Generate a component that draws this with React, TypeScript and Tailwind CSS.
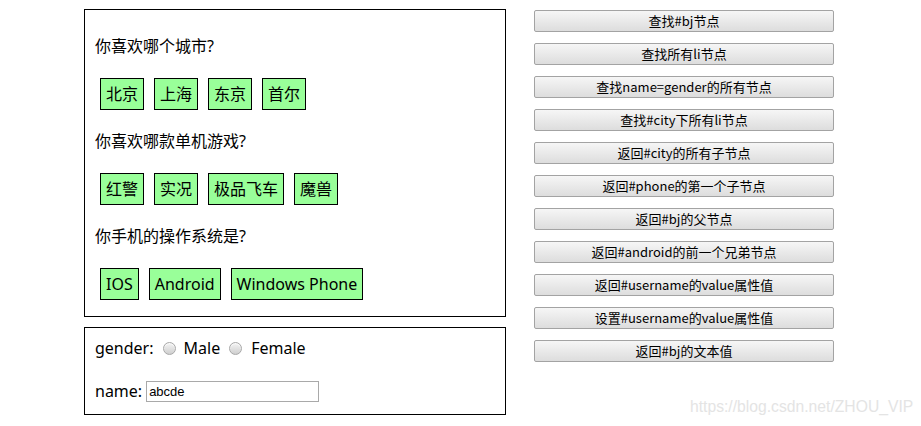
import React from "react";

const groups = [
  { q: "你喜欢哪个城市?", items: ["北京", "上海", "东京", "首尔"] },
  { q: "你喜欢哪款单机游戏?", items: ["红警", "实况", "极品飞车", "魔兽"] },
  { q: "你手机的操作系统是?", items: ["IOS", "Android", "Windows Phone"] },
];

const buttons = [
  "查找#bj节点",
  "查找所有li节点",
  "查找name=gender的所有节点",
  "查找#city下所有li节点",
  "返回#city的所有子节点",
  "返回#phone的第一个子节点",
  "返回#bj的父节点",
  "返回#android的前一个兄弟节点",
  "返回#username的value属性值",
  "设置#username的value属性值",
  "返回#bj的文本值",
];

function Radio() {
  return (
    <span className="inline-block h-[13px] w-[13px] rounded-full border border-[#a8a8a8] bg-gradient-to-b from-[#f4f4f4] to-[#cfcfcf] shadow-[inset_0_1px_1px_rgba(255,255,255,0.8)]" />
  );
}

export default function App() {
  return (
    <div
      className="relative h-[426px] w-[921px] overflow-hidden bg-white text-black"
      style={{ fontFamily: '"Microsoft YaHei", "Noto Sans CJK SC", sans-serif' }}
    >
      <div className="flex items-start gap-[28px] pl-[84px] pt-[9px]">
        {/* left column */}
        <div
          className="flex w-[422px] flex-col gap-[10px]"
          style={{ fontFamily: '"Noto Sans", "Noto Sans CJK SC", sans-serif' }}
        >
          <div className="border border-black px-[10px] pb-[11px] pt-[10px]">
            {groups.map((g) => (
              <div key={g.q} className="pt-[16px]">
                <p className="text-[16px] leading-[21px]">{g.q}</p>
                <ul className="mt-[16px] flex gap-[10px] p-[5px]">
                  {g.items.map((it) => (
                    <li
                      key={it}
                      className="border border-black bg-[#99ff99] px-[5px] py-[5px] text-[16px] leading-[20px]"
                    >
                      {it}
                    </li>
                  ))}
                </ul>
              </div>
            ))}
          </div>

          <div className="flex flex-col gap-[21px] border border-black px-[10px] pb-[11px] pt-[10px] text-[16px]">
            <div className="flex h-[21px] items-center leading-[21px]">
              <span>gender:</span>
              <span className="ml-[9px] flex items-center">
                <Radio />
              </span>
              <span className="ml-[8px]">Male</span>
              <span className="ml-[9px] flex items-center">
                <Radio />
              </span>
              <span className="ml-[9px]">Female</span>
            </div>
            <div className="flex h-[23px] items-center leading-[21px]">
              <span>name:</span>
              <input
                readOnly
                value="abcde"
                className="ml-[4px] h-[21px] w-[173px] border border-[#a9a9a9] px-[2px] text-[13px] outline-none"
                style={{ fontFamily: '"Liberation Sans", Arial, sans-serif' }}
              />
            </div>
          </div>
        </div>

        {/* buttons */}
        <div className="flex w-[300px] flex-col gap-[11px] pt-[1px]">
          {buttons.map((b) => (
            <button
              key={b}
              className="h-[22px] w-[300px] rounded-[2px] border border-[#a3a3a3] bg-gradient-to-b from-[#f6f6f6] to-[#dddddd] text-[13px] leading-[20px] text-black"
            >
              {b}
            </button>
          ))}
        </div>
      </div>

      <div
        className="absolute left-[690px] top-[397px] text-[15.7px] leading-[20px] text-[#e4e4e4]"
        style={{ fontFamily: '"Liberation Sans", Arial, sans-serif' }}
      >
        https://blog.csdn.net/ZHOU_VIP
      </div>
    </div>
  );
}
